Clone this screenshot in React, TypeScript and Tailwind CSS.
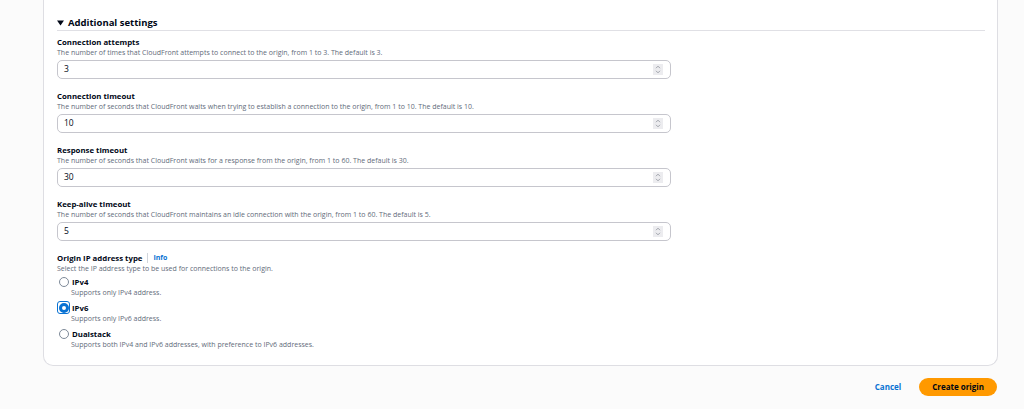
import React from "react";

const fields = [
  {
    label: "Connection attempts",
    desc: "The number of times that CloudFront attempts to connect to the origin, from 1 to 3. The default is 3.",
    value: "3",
  },
  {
    label: "Connection timeout",
    desc: "The number of seconds that CloudFront waits when trying to establish a connection to the origin, from 1 to 10. The default is 10.",
    value: "10",
  },
  {
    label: "Response timeout",
    desc: "The number of seconds that CloudFront waits for a response from the origin, from 1 to 60. The default is 30.",
    value: "30",
  },
  {
    label: "Keep-alive timeout",
    desc: "The number of seconds that CloudFront maintains an idle connection with the origin, from 1 to 60. The default is 5.",
    value: "5",
  },
];

const options = [
  { label: "IPv4", desc: "Supports only IPv4 address.", checked: false },
  { label: "IPv6", desc: "Supports only IPv6 address.", checked: true },
  { label: "Dualstack", desc: "Supports both IPv4 and IPv6 addresses, with preference to IPv6 addresses.", checked: false },
];

function Spinner() {
  return (
    <div className="flex h-[11px] w-[10px] flex-col items-center justify-center bg-[#ececef]">
      <svg width="6" height="9" viewBox="0 0 6 9" fill="none" stroke="#8d9199" strokeWidth="0.8">
        <path d="M1 3.2 3 1.2 5 3.2" />
        <path d="M1 5.8 3 7.8 5 5.8" />
      </svg>
    </div>
  );
}

function NumberField({ label, desc, value }: { label: string; desc: string; value: string }) {
  return (
    <div className="flex flex-col">
      <div className="text-[7.8px] font-bold leading-[12px] text-[#000716]">{label}</div>
      <div className="text-[7px] leading-[9px] text-[#5f6b7a]">{desc}</div>
      <div className="mt-[3px] flex h-[19px] w-[614px] items-center justify-between rounded-[5px] border border-[#c6c6cd] pl-[6px] pr-[7px]">
        <span className="text-[8.5px] text-[#000716]">{value}</span>
        <Spinner />
      </div>
    </div>
  );
}

function Radio({ checked }: { checked: boolean }) {
  if (checked) {
    return (
      <div className="flex h-[13px] w-[13px] items-center justify-center rounded-[3px] border border-[#0972d3]">
        <div className="h-[10px] w-[10px] rounded-full border-[3px] border-[#0972d3] bg-white" />
      </div>
    );
  }
  return (
    <div className="flex h-[13px] w-[13px] items-center justify-center">
      <div className="h-[10px] w-[10px] rounded-full border border-[#7d8998] bg-white" />
    </div>
  );
}

export default function App() {
  return (
    <div
      className="h-[409px] w-[1024px] overflow-hidden bg-[#fbfbfb]"
      style={{ fontFamily: '"Open Sans", "Noto Sans", sans-serif' }}
    >
      <div className="ml-[43px] w-[955px] rounded-b-[10px] border-x border-b border-[#dedee3] bg-white pb-[16px] pl-[13px] pr-[12px] pt-[16px]">
        <div className="flex items-center gap-[4px] border-b border-[#e0e0e5]">
          <svg width="7" height="6" viewBox="0 0 7 6">
            <path d="M0 0.5h7L3.5 5.5z" fill="#000716" />
          </svg>
          <span className="text-[9.5px] font-bold leading-[14px] text-[#000716]">Additional settings</span>
        </div>

        <div className="mt-[5px] flex flex-col gap-[11px]">
          {fields.map((f) => (
            <NumberField key={f.label} {...f} />
          ))}

          <div className="flex flex-col">
            <div className="flex items-center">
              <span className="text-[7.8px] font-bold leading-[12px] text-[#000716]">Origin IP address type</span>
              <span className="mx-[5px] h-[10px] w-px bg-[#d1d5db]" />
              <span className="text-[7px] font-bold text-[#0972d3]">Info</span>
            </div>
            <div className="text-[7px] leading-[9px] text-[#5f6b7a]">
              Select the IP address type to be used for connections to the origin.
            </div>
            <div className="mt-[2px] flex flex-col gap-[4px]">
              {options.map((o) => (
                <div key={o.label} className="flex flex-col">
                  <div className="flex items-center gap-[1px]">
                    <Radio checked={o.checked} />
                    <span className="ml-[1px] text-[7.8px] font-bold leading-[12px] text-[#000716]">{o.label}</span>
                  </div>
                  <div className="pl-[14px] text-[7px] leading-[9px] text-[#5f6b7a]">{o.desc}</div>
                </div>
              ))}
            </div>
          </div>
        </div>
      </div>

      <div className="mr-[27px] mt-[12px] flex items-center justify-end gap-[18px]">
        <span className="text-[8px] font-bold text-[#0972d3]">Cancel</span>
        <button className="h-[18px] rounded-full bg-[#ff9900] px-[13px] text-[8px] font-bold text-[#000716]">
          Create origin
        </button>
      </div>
    </div>
  );
}
